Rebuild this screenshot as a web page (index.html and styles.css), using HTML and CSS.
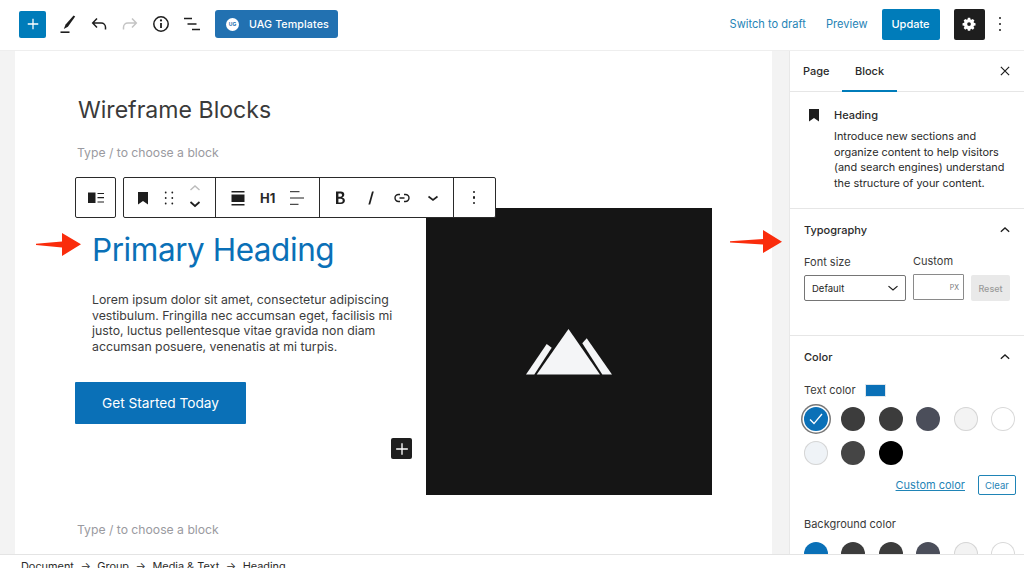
FILE: index.html
```html
<!DOCTYPE html>
<html lang="en">
<head>
<meta charset="utf-8">
<title>Wireframe Blocks</title>
<link rel="stylesheet" href="styles.css">
</head>
<body>
<div class="app">
  <header class="topbar">
    <div class="tools">
      <button class="add-btn"><svg viewBox="0 0 24 24" width="18" height="18"><path d="M12 5v14M5 12h14" stroke="#fff" stroke-width="1.7" fill="none"/></svg></button>
      <span class="tool"><svg viewBox="0 0 24 24" width="24" height="24"><path d="M19.2 4.600 17.600 3.400 9.600 12.500l-1.800 4.500 4.100-2.200z" fill="#1e1e1e"/><path d="M4.500 20.200h9" stroke="#1e1e1e" stroke-width="1.600"/></svg></span>
      <span class="tool"><svg viewBox="0 0 24 24" width="24" height="24"><path d="M18.500 17.500v-2.200c0-2.400-1.900-4.300-4.300-4.300H6M10 6.600 5.700 11l4.300 4.400" stroke="#1e1e1e" stroke-width="1.500" fill="none"/></svg></span>
      <span class="tool"><svg viewBox="0 0 24 24" width="24" height="24"><path d="M5.500 17.500v-2.200c0-2.400 1.900-4.300 4.300-4.300H18M14 6.600l4.300 4.400-4.300 4.400" stroke="#c4c4c4" stroke-width="1.500" fill="none"/></svg></span>
      <span class="tool"><svg viewBox="0 0 24 24" width="24" height="24"><circle cx="12" cy="12" r="7.200" stroke="#1e1e1e" stroke-width="1.500" fill="none"/><path d="M12 11v5" stroke="#1e1e1e" stroke-width="1.800"/><circle cx="12" cy="8.400" r="1.100" fill="#1e1e1e"/></svg></span>
      <span class="tool"><svg viewBox="0 0 24 24" width="24" height="24"><path d="M4 6.500h8M7.500 12h9M12 17.500h8" stroke="#1e1e1e" stroke-width="1.600" fill="none"/></svg></span>
      <button class="uag-btn"><span class="uag-logo">UG</span>UAG Templates</button>
    </div>
    <div class="actions">
      <a class="link-action">Switch to draft</a>
      <a class="link-action">Preview</a>
      <button class="update-btn">Update</button>
      <button class="gear-btn"><svg viewBox="0 0 24 24" width="16" height="16"><path fill-rule="evenodd" fill="#fff" d="M10 2.500h4l.6 2.700 1.500.7 2.400-1.500 2.800 2.800-1.500 2.400.7 1.500 2.700.6v4l-2.700.6-.7 1.500 1.500 2.400-2.800 2.800-2.400-1.500-1.500.7-.6 2.700h-4l-.6-2.700-1.500-.7-2.400 1.500-2.800-2.800 1.500-2.400-.7-1.500-2.700-.6v-4l2.700-.6.7-1.500-1.500-2.400 2.800-2.800 2.400 1.500 1.500-.7zM12 10a3.200 3.200 0 1 0 0 6.400 3.200 3.200 0 0 0 0-6.400z" transform="translate(1.600 .6) scale(.87)"/></svg></button>
      <span class="more-v"><i></i><i></i><i></i></span>
    </div>
  </header>

  <div class="workspace">
    <main class="editor">
      <div class="canvas">
        <h1 class="post-title">Wireframe Blocks</h1>
        <p class="placeholder first">Type / to choose a block</p>
        <section class="media-text">
          <div class="mt-copy">
            <h2 class="primary-heading">Primary Heading</h2>
            <p class="lorem">Lorem ipsum dolor sit amet, consectetur adipiscing vestibulum. Fringilla nec accumsan eget, facilisis mi justo, luctus pellentesque vitae gravida non diam accumsan posuere, venenatis at mi turpis.</p>
            <a class="cta">Get Started Today</a>
          </div>
          <div class="mt-image">
            <svg viewBox="0 0 86 46" width="86" height="46"><g fill="#f4f5f7"><path d="M42.500 0 74 45.500H10.700z"/><path d="M20.700 15 25.700 18.700 8.300 45.500H0z"/><path d="M60.700 9.300 56.300 14.300 76.300 45.500H86z"/></g></svg>
          </div>
        </section>
        <p class="placeholder last">Type / to choose a block</p>

        <div class="block-toolbar">
          <div class="tb-group single">
            <svg viewBox="0 0 24 24" width="24" height="24"><path d="M4 6.500h7.500v10.500H4z" fill="#1e1e1e"/><path d="M13.500 7.500H20M13.500 11.700H20M13.500 16H20" stroke="#1e1e1e" stroke-width="1.200"/></svg>
          </div>
          <div class="tb-group">
            <div class="tb-sec sec-block">
              <svg class="ico" viewBox="0 0 24 24" width="24" height="24"><path d="M7 6h10v12.500l-5-3.500-5 3.500z" fill="#1e1e1e"/></svg>
              <svg class="ico" viewBox="0 0 24 24" width="24" height="24"><g fill="#1e1e1e"><circle cx="8.700" cy="6.500" r=".9"/><circle cx="15.300" cy="6.500" r=".9"/><circle cx="8.700" cy="12" r=".9"/><circle cx="15.300" cy="12" r=".9"/><circle cx="8.700" cy="17.500" r=".9"/><circle cx="15.300" cy="17.500" r=".9"/></g></svg>
              <svg class="ico" viewBox="0 0 24 40" width="24" height="40"><path d="M7.500 12 12 8l4.500 4" stroke="#bbb" stroke-width="1.400" fill="none"/><path d="M7.500 24 12 28 16.500 24" stroke="#1e1e1e" stroke-width="1.700" fill="none"/></svg>
            </div>
            <div class="tb-sec sec-align">
              <svg class="ico" viewBox="0 0 24 24" width="24" height="24"><path d="M5.500 8.500h13v7.500h-13z" fill="#1e1e1e"/><path d="M5.500 5.700h13M5.500 18.800h13" stroke="#1e1e1e" stroke-width="1.400"/></svg>
              <span class="h1-label">H1</span>
              <svg class="ico" viewBox="0 0 24 24" width="24" height="24"><path d="M5 5.700h9.500M5 12h14M5 18.300h8.500" stroke="#1e1e1e" stroke-width="1"/></svg>
            </div>
            <div class="tb-sec sec-format">
              <svg class="ico" viewBox="0 0 24 24" width="24" height="24"><path d="M8 5.500h4.800c2.200 0 3.500 1.200 3.500 3 0 1.500-.9 2.600-2.200 2.900 1.700.3 2.800 1.500 2.800 3.200 0 2.200-1.600 3.400-4 3.400H8z M10.400 7.500v3.300h2.100c1 0 1.500-.6 1.500-1.700s-.6-1.600-1.600-1.600zm0 5.200v3.800h2.500c1.200 0 1.800-.7 1.800-1.900s-.7-1.900-1.900-1.900z" fill="#1e1e1e" fill-rule="evenodd"/></svg>
              <svg class="ico" viewBox="0 0 24 24" width="24" height="24"><path d="M13 5.500h1.800L11.200 18.500H9.400z" fill="#1e1e1e"/></svg>
              <svg class="ico" viewBox="0 0 24 24" width="24" height="24"><path d="M10 8.500H8.500a3.500 3.500 0 0 0 0 7H10M14 8.500h1.500a3.500 3.500 0 0 1 0 7H14M9.500 12h5" stroke="#1e1e1e" stroke-width="1.400" fill="none"/></svg>
              <svg class="ico" viewBox="0 0 24 24" width="24" height="24"><path d="M7.500 10.500l4.500 3.500 4.500-3.500" stroke="#1e1e1e" stroke-width="1.600" fill="none"/></svg>
            </div>
            <div class="tb-sec sec-more">
              <span class="more-v"><i></i><i></i><i></i></span>
            </div>
          </div>
        </div>

        <button class="inserter"><svg viewBox="0 0 24 24" width="20" height="20"><path d="M12 5v14M5 12h14" stroke="#fff" stroke-width="1.600" fill="none"/></svg></button>
      </div>
      <svg class="arrow arrow-left" viewBox="0 0 46 26" width="46" height="26"><path d="M0 11.800 26 9.500V1l19 11.300L26 24v-8.500L0 13z" fill="#fa2c0c"/></svg>
      <svg class="arrow arrow-right" viewBox="0 0 54 26" width="54" height="26"><path d="M1 12.300 34 10V1l19 11.700L34 24v-8.500L1 13.500z" fill="#fa2c0c"/></svg>
    </main>

    <aside class="sidebar">
      <div class="tabs">
        <div class="tab-row">
          <span class="tab">Page</span>
          <span class="tab active">Block</span>
        </div>
        <svg class="close" viewBox="0 0 24 24" width="18" height="18"><path d="M6.500 6.500l11 11M17.500 6.500l-11 11" stroke="#1e1e1e" stroke-width="1.600"/></svg>
      </div>
      <section class="panel block-info">
        <svg viewBox="0 0 24 24" width="24" height="24"><path d="M7 6h10v12.500l-5-3.500-5 3.500z" fill="#1e1e1e"/></svg>
        <div>
          <h3>Heading</h3>
          <p>Introduce new sections and organize content to help visitors (and search engines) understand the structure of your content.</p>
        </div>
      </section>
      <section class="panel typo">
        <div class="panel-head"><span>Typography</span><svg viewBox="0 0 24 24" width="20" height="20"><path d="M7 14l5-4.500 5 4.500" stroke="#1e1e1e" stroke-width="1.600" fill="none"/></svg></div>
        <div class="typo-grid">
          <div class="fs-col">
            <label>Font size</label>
            <div class="select">Default<svg viewBox="0 0 24 24" width="18" height="18"><path d="M6 9.500l6 5 6-5" stroke="#1e1e1e" stroke-width="1.700" fill="none"/></svg></div>
          </div>
          <div class="cu-col">
            <label>Custom</label>
            <div class="px-input">PX</div>
          </div>
          <button class="reset">Reset</button>
        </div>
      </section>
      <section class="panel color">
        <div class="panel-head"><span>Color</span><svg viewBox="0 0 24 24" width="20" height="20"><path d="M7 14l5-4.500 5 4.500" stroke="#1e1e1e" stroke-width="1.600" fill="none"/></svg></div>
        <div class="label-row">Text color<span class="chip"></span></div>
        <div class="swatches">
          <span class="sw selected"><svg viewBox="0 0 24 24" width="22" height="22"><path d="M5.500 12.500l4.300 4.500L18.500 6.500" stroke="#fff" stroke-width="1.500" fill="none"/></svg></span>
          <span class="sw dark"></span>
          <span class="sw dark"></span>
          <span class="sw slate"></span>
          <span class="sw light"></span>
          <span class="sw white"></span>
          <span class="sw pale"></span>
          <span class="sw mid"></span>
          <span class="sw black"></span>
        </div>
        <div class="color-actions"><a>Custom color</a><button>Clear</button></div>
        <div class="bg-label">Background color</div>
        <div class="swatches bg">
          <span class="sw blue"></span>
          <span class="sw dark"></span>
          <span class="sw dark"></span>
          <span class="sw slate"></span>
          <span class="sw light"></span>
          <span class="sw white"></span>
        </div>
      </section>
    </aside>
  </div>

  <footer class="crumbs">
    <span>Document</span><b>→</b><span>Group</span><b>→</b><span>Media &amp; Text</span><b>→</b><span>Heading</span>
  </footer>
</div>
</body>
</html>
```
FILE: styles.css
```css
* { box-sizing: border-box; }
html, body { margin: 0; height: 100%; overflow: hidden; }
body { font-family: Inter, "Liberation Sans", sans-serif; color: #1e1e1e; background: #fff; font-size: 13px; }
button { font: inherit; border: 0; padding: 0; cursor: pointer; }
p, h1, h2, h3 { margin: 0; font-weight: 400; }

.app { width: 1024px; height: 568px; display: flex; flex-direction: column; overflow: hidden; }

.topbar { flex: 0 0 51px; height: 51px; display: flex; justify-content: space-between; align-items: center; border-bottom: 1px solid #eeeeee; padding: 0 23px 2px 19px; }
.tools { display: flex; align-items: center; }
.add-btn { width: 27px; height: 27px; background: #007cba; border-radius: 2px; display: flex; align-items: center; justify-content: center; margin-right: 6px; }
.tool { width: 31px; height: 24px; display: flex; justify-content: center; align-items: center; }
.tool:nth-child(6) { margin-right: 8px; }
.uag-btn { height: 28px; width: 123px; background: #2271b1; color: #fff; border-radius: 3px; font-size: 10.700px; font-weight: 500; display: flex; align-items: center; padding-left: 11px; gap: 10px; letter-spacing: .1px; }
.uag-logo { width: 13px; height: 13px; border-radius: 50%; background: #fff; color: #2271b1; font-size: 5px; font-weight: 700; display: flex; align-items: center; justify-content: center; }
.actions { display: flex; align-items: center; }
.link-action { color: #1f84b6; font-size: 11.100px; }
.link-action:first-child { margin-right: 20px; }
.link-action:nth-child(2) { margin-right: 14px; }
.update-btn { width: 58px; height: 31px; background: #007cba; color: #fff; border-radius: 2px; font-size: 11px; font-weight: 500; margin-right: 14px; }
.gear-btn { width: 31px; height: 31px; background: #1e1e1e; border-radius: 2px; display: flex; align-items: center; justify-content: center; margin-right: 14px; }
.more-v { display: inline-flex; flex-direction: column; gap: 3.500px; width: 2.500px; }
.more-v i { width: 2.200px; height: 2.200px; background: #1e1e1e; border-radius: 50%; display: block; }

.workspace { flex: 1; min-height: 0; display: flex; }
.editor { position: relative; width: 790px; background: #f3f3f3; border-right: 1px solid #e8e8e8; padding: 0 17px 0 15px; overflow: hidden; }
.canvas { position: relative; height: 100%; background: #fff; padding: 45px 60px 0 60px; color: #3a3a3a; }
.post-title { font-size: 23.100px; line-height: 28px; color: #3a3a3a; margin-left: 3px; }
.placeholder { font-size: 12.200px; line-height: 16px; color: #9a9aa0; margin-left: 2px; }
.placeholder.first { margin-top: 21px; }
.placeholder.last { margin-top: 27px; }
.media-text { display: flex; margin-top: 47px; height: 287px; }
.mt-copy { width: 351px; }
.primary-heading { font-size: 31.500px; line-height: 40px; color: #0a70b7; margin: 22px 0 0 17px; letter-spacing: -.45px; }
.lorem { font-size: 12.300px; line-height: 15.500px; color: #3c3c3c; margin: 22px 0 0 17px; width: 310px; }
.cta { display: flex; align-items: center; justify-content: center; width: 171px; height: 42px; margin-top: 28px; background: #0a70b7; color: #fff; font-size: 13.700px; border-radius: 1px; }
.mt-image { width: 286px; background: #151515; display: flex; justify-content: center; align-items: flex-start; padding-top: 121px; }

.block-toolbar { position: absolute; left: 60px; top: 126px; display: flex; gap: 7px; height: 41px; }
.tb-group { display: flex; height: 41px; background: #fff; border: 1px solid #2a2a2a; border-radius: 2px; }
.tb-group.single { width: 41px; align-items: center; justify-content: center; }
.tb-sec { display: flex; align-items: center; justify-content: space-around; border-right: 1px solid #2a2a2a; }
.tb-sec:last-child { border-right: 0; }
.sec-block { width: 92px; padding: 0 0 0 7px; justify-content: flex-start; gap: 2px; }
.sec-align { width: 104px; padding: 0 0 0 10px; justify-content: flex-start; gap: 10px; }
.sec-format { width: 134px; padding: 0 4px; }
.sec-more { width: 41px; }
.h1-label { font-size: 13px; font-weight: 700; color: #2a2a2a; }

.inserter { position: absolute; left: 376px; top: 387px; width: 21px; height: 21px; background: #1e1e1e; border-radius: 2px; display: flex; align-items: center; justify-content: center; }
.arrow { position: absolute; }
.arrow-left { left: 36px; top: 181px; }
.arrow-right { left: 729px; top: 178px; }

.sidebar { width: 234px; display: flex; flex-direction: column; overflow: hidden; background: #fff; }
.tabs { flex: none; height: 41px; display: flex; justify-content: space-between; align-items: center; border-bottom: 1px solid #e6e6e6; padding-right: 10px; }
.tab-row { display: flex; height: 41px; padding-left: 13px; }
.tab { font-size: 11px; font-weight: 500; line-height: 41px; width: 39px; color: #2a2a2a; }
.tab.active { text-align: center; width: 55px; border-bottom: 2px solid #007cba; height: 41px; }
.panel { flex: none; border-bottom: 1px solid #e6e6e6; }
.block-info { height: 117px; display: flex; padding: 16px 14px 0 12px; gap: 8px; }
.block-info > svg { flex: none; margin-top: -5px; }
.block-info h3 { font-size: 11px; font-weight: 500; line-height: 15px; color: #2a2a2a; margin-bottom: 6px; }
.block-info p { font-size: 10.900px; line-height: 15.500px; color: #2a2a2a; width: 180px; }
.typo { height: 127px; padding: 12px 14px 0 14px; }
.panel-head { display: flex; justify-content: space-between; align-items: center; font-size: 11px; font-weight: 500; color: #2a2a2a; height: 18px; margin-right: -5px; }
.typo-grid { display: flex; align-items: flex-end; margin-top: 15px; }
.typo-grid label { display: block; font-size: 11px; line-height: 14px; color: #3a3a3a; }
.fs-col { width: 102px; margin-right: 7px; }
.cu-col { width: 51px; margin-right: 7px; }
.fs-col label { margin-bottom: 6px; }
.cu-col label { margin-bottom: 6px; }
.select { height: 26px; border: 1px solid #757575; border-radius: 2px; font-size: 9.500px; display: flex; align-items: center; justify-content: space-between; padding: 0 3px 0 7px; }
.px-input { height: 26px; border: 1px solid #8a8a8a; border-radius: 1px; font-size: 7px; color: #777; display: flex; align-items: center; justify-content: flex-end; padding-right: 4px; margin-bottom: 1px; }
.reset { width: 39px; height: 26px; background: #e9e9e9; color: #9b9b9b; font-size: 9px; font-weight: 500; border-radius: 2px; }
.color { padding: 12px 8px 0 14px; }
.color .panel-head { margin-right: 1px; }
.label-row { display: flex; align-items: center; gap: 9px; font-size: 11px; color: #3a3a3a; margin-top: 17px; height: 14px; }
.chip { width: 21px; height: 13px; background: #0a70b7; border: 1px solid #dfe6ec; }
.swatches { display: grid; grid-template-columns: repeat(6, 24px); column-gap: 13.600px; row-gap: 10px; margin-top: 10px; margin-left: -.5px; }
.swatches.bg { margin-top: 11px; }
.sw { width: 24px; height: 24px; border-radius: 50%; display: flex; align-items: center; justify-content: center; }
.sw.selected { background: #0a70b7; box-shadow: 0 0 0 1.500px #fff, 0 0 0 3px #777; }
.sw.dark { background: #3c3c3c; }
.sw.slate { background: #4b4e5a; }
.sw.light { background: #f3f3f3; box-shadow: inset 0 0 0 1px #d5d5d5; }
.sw.white { background: #fff; box-shadow: inset 0 0 0 1px #d9d9d9; }
.sw.pale { background: #eff3f7; box-shadow: inset 0 0 0 1px #d5d5d5; }
.sw.mid { background: #454545; }
.sw.black { background: #000; }
.sw.blue { background: #0a70b7; }
.color-actions { display: flex; justify-content: flex-end; align-items: center; gap: 13px; margin-top: 10px; }
.color-actions a { color: #1f84b6; font-size: 11px; text-decoration: underline; }
.color-actions button { width: 38px; height: 20px; background: #fff; border: 1px solid #1f84b6; color: #1f84b6; font-size: 9.500px; border-radius: 2px; }
.bg-label { font-size: 11px; color: #3a3a3a; margin-top: 22px; height: 14px; }

.crumbs { position: absolute; left: 0; top: 554px; width: 1024px; height: 14px; background: #fff; border-top: 1px solid #e4e4e4; padding: 4px 0 0 21px; font-size: 10.900px; line-height: 14px; display: flex; gap: 6.500px; color: #2a2a2a; overflow: hidden; }
.crumbs b { font-weight: 400; }
```
